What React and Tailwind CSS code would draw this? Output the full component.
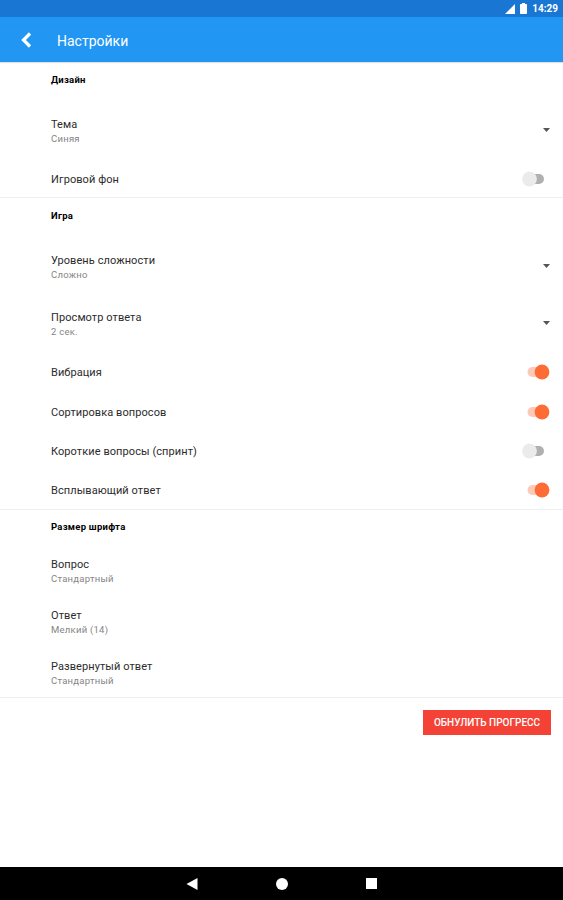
import { useState } from 'react';
import clsx from 'clsx';

function StatusBar() {
  return (
    <div className="h-[17px] bg-[#1976d2] flex items-center justify-end pr-[5px] text-white">
      <svg width="10" height="10" viewBox="0 0 10 10" className="mr-[5px]">
        <path d="M10 0V10H0Z" fill="currentColor" />
      </svg>
      <svg width="7" height="11" viewBox="0 0 7 11" className="mr-[5px]">
        <path d="M2 0h3v1h1.2q.8 0 .8.8v8.4q0 .8-.8.8H.8Q0 11 0 10.200V1.800Q0 1 .8 1H2Z" fill="currentColor" />
      </svg>
      <span className="text-[10px] leading-none font-bold">14:29</span>
    </div>
  );
}

function AppBar() {
  return (
    <header className="h-[45px] bg-[#2196f3] flex items-center text-white shadow-[0_1px_1px_rgba(0,0,0,0.12)]">
      <button className="ml-[20px]">
        <svg width="12" height="16" viewBox="0 0 12 16" className="block">
          <path d="M10 1.500 3.500 8 10 14.500" fill="none" stroke="currentColor" strokeWidth="3.200" />
        </svg>
      </button>
      <h1 className="ml-[25px] mt-[3px] text-[14px] leading-none">Настройки</h1>
    </header>
  );
}

function Section({ title, children }) {
  return (
    <section className="border-b border-[#eeeeee]">
      <h2 className="h-[35px] pl-[51px] flex items-center text-[9.500px] tracking-[0.250px] font-bold text-black">
        {title}
      </h2>
      {children}
    </section>
  );
}

function Labels({ title, value }) {
  return (
    <div>
      <p className="text-[11px] leading-[15px] tracking-[0.080px] text-[#2b2b2b]">{title}</p>
      <p className="text-[9.500px] leading-[14px] tracking-[0.250px] text-[#858585]">{value}</p>
    </div>
  );
}

function SelectRow({ title, value }) {
  return (
    <div className="h-[57px] pl-[51px] pr-[13px] flex items-center justify-between">
      <Labels title={title} value={value} />
      <svg width="7" height="4" viewBox="0 0 7 4" className="mt-[-3px]">
        <path d="M0 0H7L3.500 4Z" fill="#555" />
      </svg>
    </div>
  );
}

function TextRow({ title, value }) {
  return (
    <div className="h-[51px] pl-[51px] flex items-center">
      <Labels title={title} value={value} />
    </div>
  );
}

function SwitchRow({ title, defaultOn = false }) {
  const [on, setOn] = useState(defaultOn);

  return (
    <div className="h-[39.330px] pl-[51px] pr-[13px] flex items-center justify-between">
      <span className="text-[11px] leading-[15px] tracking-[0.080px] text-[#2b2b2b]">{title}</span>
      <button className="-mt-px" onClick={() => setOn(!on)} role="switch" aria-checked={on} aria-label={title}>
        <svg width="28" height="16" viewBox="0 0 28 16" className="block">
          <rect
            x={on ? 5.500 : 5}
            y="3"
            width={on ? 18 : 17}
            height="10"
            rx="5"
            className={clsx(on ? 'fill-[#ffc9b8]' : 'fill-[#b0b0b0]')}
          />
          <circle cx={on ? 20 : 7.500} cy="8" r="7.400" className={clsx(on ? 'fill-[#ff6b35]' : 'fill-[#ebebeb]')} />
        </svg>
      </button>
    </div>
  );
}

function NavigationBar() {
  return (
    <nav className="h-[33px] bg-black flex items-center justify-center gap-[78px] text-white">
      <svg width="12" height="12" viewBox="0 0 12 12">
        <path d="M11.500 0V12L0.500 6Z" fill="currentColor" />
      </svg>
      <span className="size-3 rounded-full bg-white" />
      <span className="size-[11px] bg-white" />
    </nav>
  );
}

export default function App() {
  return (
    <div className="h-[900px] w-full bg-white flex flex-col overflow-hidden font-[Roboto,sans-serif]">
      <StatusBar />
      <AppBar />
      <main className="flex-1 pt-px">
        <Section title="Дизайн">
          <div className="pt-[5px] -mb-[2px]">
            <SelectRow title="Тема" value="Синяя" />
            <SwitchRow title="Игровой фон" />
          </div>
        </Section>
        <Section title="Игра">
          <div className="pt-[6px] -mb-[2px]">
            <SelectRow title="Уровень сложности" value="Сложно" />
            <SelectRow title="Просмотр ответа" value="2 сек." />
            <SwitchRow title="Вибрация" defaultOn />
            <SwitchRow title="Сортировка вопросов" defaultOn />
            <SwitchRow title="Короткие вопросы (спринт)" />
            <SwitchRow title="Всплывающий ответ" defaultOn />
          </div>
        </Section>
        <Section title="Размер шрифта">
          <div className="pt-px -mb-[2px]">
            <TextRow title="Вопрос" value="Стандартный" />
            <TextRow title="Ответ" value="Мелкий (14)" />
            <TextRow title="Развернутый ответ" value="Стандартный" />
          </div>
        </Section>
        <div className="flex justify-end pt-3 pr-3">
          <button className="w-[128px] h-[25px] pt-[2px] bg-[#f44336] text-white text-[10px] font-medium leading-none">
            ОБНУЛИТЬ ПРОГРЕСС
          </button>
        </div>
      </main>
      <NavigationBar />
    </div>
  );
}
